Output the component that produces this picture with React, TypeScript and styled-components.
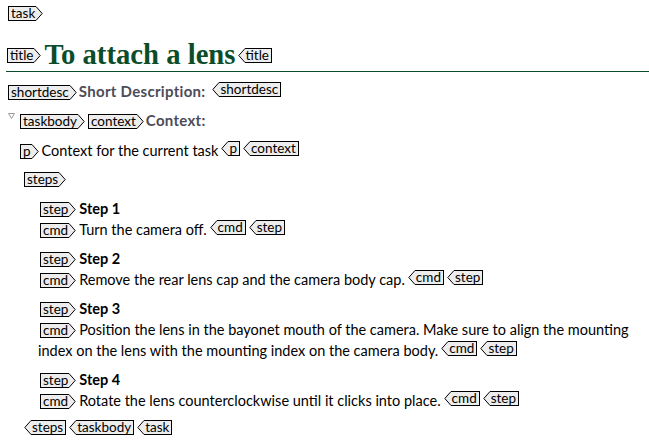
import React from "react";
import styled, { createGlobalStyle } from "styled-components";

const Global = createGlobalStyle`
  html, body { margin: 0; padding: 0; background: #ffffff; }
  body {
    font-family: Lato, "Open Sans", "Noto Sans", sans-serif;
    font-size: 14.5px;
    color: #000000;
  }
`;

const GREEN = "#0b4d2a";
const TAG_BG = "#ededed";

const Page = styled.div`
  padding: 2px 0 0 6px;
`;

const Line = styled.div<{ $mt?: number; $indent?: number }>`
  line-height: 21px;
  margin-top: ${(p) => p.$mt ?? 0}px;
  padding-left: ${(p) => p.$indent ?? 0}px;
  white-space: nowrap;
`;

const TitleBlock = styled.div`
  margin-top: 17px;
  padding: 0 0 3px 0;
  border-bottom: 1px solid ${GREEN};
  display: flex;
  align-items: flex-end;
  height: 28px;
`;

const TitleText = styled.h1`
  margin: 0;
  font-family: "Liberation Serif", "Times New Roman", serif;
  font-weight: bold;
  font-size: 28.7px;
  line-height: 28px;
  color: ${GREEN};
`;

const TitleTagSlot = styled.span`
  display: inline-flex;
  margin-bottom: 5px;
  margin-left: -1px;
`;

const SectionLabel = styled.span`
  font-weight: bold;
  color: #4c4c58;
  font-size: 15px;
  letter-spacing: 0.3px;
  margin-left: -1px;
`;

const StepTitle = styled.span`
  font-weight: bold;
`;

const TagBox = styled.span<{ $close?: boolean; $lead?: boolean }>`
  display: inline-flex;
  flex-direction: ${(p) => (p.$close ? "row-reverse" : "row")};
  height: 15px;
  vertical-align: 0.5px;
  margin-left: ${(p) => (p.$close ? 3 : p.$lead ? 2 : 0)}px;
  margin-right: ${(p) => (p.$close ? 0 : 3)}px;
`;

const TagLabel = styled.span<{ $close?: boolean }>`
  display: block;
  box-sizing: border-box;
  height: 15px;
  background: ${TAG_BG};
  border: 1px solid #000;
  ${(p) => (p.$close ? "border-left: none;" : "border-right: none;")}
  font-family: Lato, "Open Sans", sans-serif;
  font-weight: normal;
  font-size: 13.5px;
  line-height: 13px;
  padding: ${(p) => (p.$close ? "0 2px 0 1px" : "0 1px 0 2px")};
  color: #000;
  overflow: hidden;
`;

const Tag: React.FC<{ name: string; close?: boolean; lead?: boolean }> = ({ name, close, lead }) => (
  <TagBox $close={close} $lead={lead}>
    <TagLabel $close={close}>{name}</TagLabel>
    <svg width="7" height="15" viewBox="0 0 7 15" style={{ display: "block" }}>
      {close ? (
        <polyline points="7,0.5 0.8,7.5 7,14.5" fill={TAG_BG} stroke="#000" strokeWidth="1" />
      ) : (
        <polyline points="0,0.5 6.2,7.5 0,14.5" fill={TAG_BG} stroke="#000" strokeWidth="1" />
      )}
    </svg>
  </TagBox>
);

const Toggle = styled.span`
  display: inline-block;
  width: 7px;
  margin: 0 5px 0 2px;
  vertical-align: 7px;
  line-height: 0;
`;

const Steps = styled.div`
  margin-top: 9px;
  padding-left: 32px;
  padding-right: 4px;
`;

const Step = styled.div`
  line-height: 21px;
  & + & {
    margin-top: 8px;
  }
`;

const Cmd = styled.div`
  line-height: 21px;
`;

const steps = [
  { n: 1, text: "Turn the camera off." },
  { n: 2, text: "Remove the rear lens cap and the camera body cap." },
  {
    n: 3,
    text:
      "Position the lens in the bayonet mouth of the camera. Make sure to align the mounting index on the lens with the mounting index on the camera body.",
  },
  { n: 4, text: "Rotate the lens counterclockwise until it clicks into place." },
];

export default function App() {
  return (
    <>
      <Global />
      <Page>
        <Line>
          <Tag name="task" lead />
        </Line>
        <TitleBlock>
          <TitleTagSlot>
            <Tag name="title" lead />
          </TitleTagSlot>
          <TitleText>To attach a lens</TitleText>
          <TitleTagSlot>
            <Tag name="title" close />
          </TitleTagSlot>
        </TitleBlock>
        <Line $mt={9}>
          <Tag name="shortdesc" lead />
          <SectionLabel>Short Description: </SectionLabel>
          <Tag name="shortdesc" close />
        </Line>
        <Line $mt={8}>
          <Toggle>
            <svg width="7" height="6" viewBox="0 0 7 6">
              <polygon points="0.5,0.5 6.5,0.5 3.5,5.5" fill="none" stroke="#9a9a9a" strokeWidth="1" />
            </svg>
          </Toggle>
          <Tag name="taskbody" />
          <Tag name="context" />
          <SectionLabel>Context:</SectionLabel>
        </Line>
        <Line $mt={9} $indent={12}>
          <Tag name="p" lead />
          Context for the current task
          <Tag name="p" close />
          <Tag name="context" close />
        </Line>
        <Line $mt={7} $indent={16}>
          <Tag name="steps" lead />
        </Line>
        <Steps>
          {steps.map((s) => (
            <Step key={s.n}>
              <div>
                <Tag name="step" lead />
                <StepTitle>Step {s.n}</StepTitle>
              </div>
              <Cmd>
                <Tag name="cmd" lead />
                {s.text}
                <Tag name="cmd" close />
                <Tag name="step" close />
              </Cmd>
            </Step>
          ))}
        </Steps>
        <Line $mt={8} $indent={15}>
          <Tag name="steps" close />
          <Tag name="taskbody" close />
          <Tag name="task" close />
        </Line>
      </Page>
    </>
  );
}
